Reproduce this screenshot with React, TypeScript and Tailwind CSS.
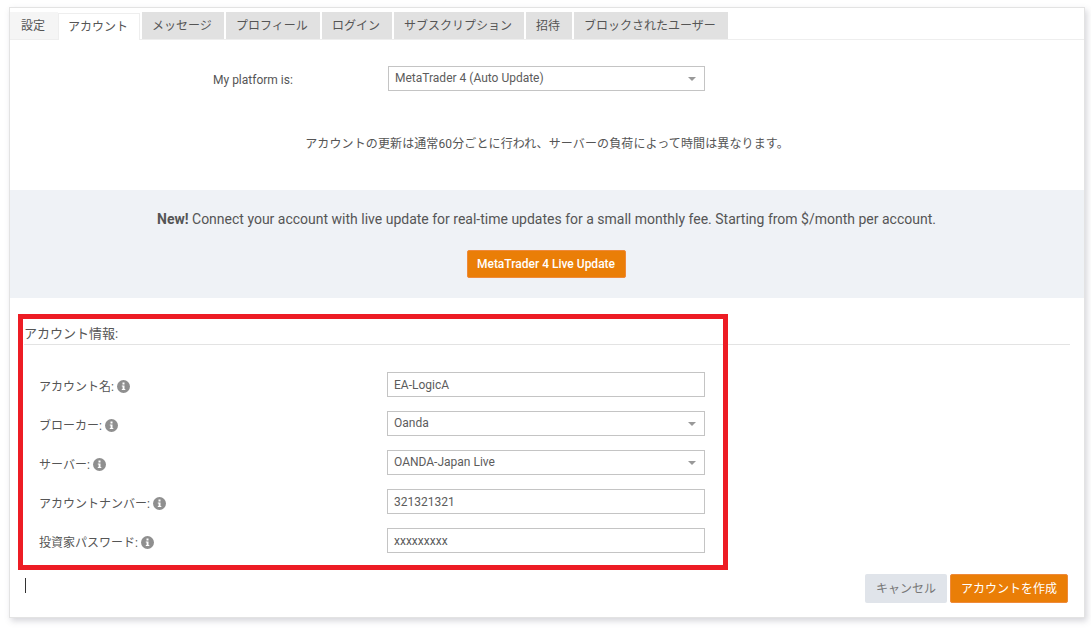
import type { ReactNode } from 'react'

const FONT = "font-['Roboto','Noto_Sans_CJK_JP',sans-serif]"

const TABS = [
  { label: '設定', cls: 'w-[48px] h-[27px] bg-[#f5f5f5]' },
  { label: 'アカウント', cls: '-ml-[2px] -mb-px w-[82px] h-[27px] bg-white border-x border-t border-[#eeeeee]' },
  { label: 'メッセージ', cls: 'w-[82px] h-[27px] bg-[#e1e1e1]' },
  { label: 'プロフィール', cls: 'w-[94px] h-[27px] bg-[#e1e1e1]' },
  { label: 'ログイン', cls: 'w-[70px] h-[27px] bg-[#e1e1e1]' },
  { label: 'サブスクリプション', cls: 'w-[130px] h-[27px] bg-[#e1e1e1]' },
  { label: '招待', cls: 'w-[46px] h-[27px] bg-[#e1e1e1]' },
  { label: 'ブロックされたユーザー', cls: 'w-[154px] h-[27px] bg-[#e1e1e1]' },
]

const FIELDS = [
  { label: 'アカウント名:', value: 'EA-LogicA' },
  { label: 'ブローカー:', value: 'Oanda', select: true },
  { label: 'サーバー:', value: 'OANDA-Japan Live', select: true },
  { label: 'アカウントナンバー:', value: '321321321' },
  { label: '投資家パスワード:', value: 'xxxxxxxxx' },
]

function InfoIcon() {
  return (
    <svg width="13" height="13" viewBox="0 0 13 13" className="shrink-0">
      <circle cx="6.5" cy="6.5" r="6.5" fill="#8f8f8f" />
      <rect x="5.5" y="2.5" width="2" height="2" fill="#fff" />
      <path d="M4.8 5.5h2.7v3.6h.8v1H4.8v-1h.8V6.5h-.8z" fill="#fff" />
    </svg>
  )
}

function Box({ value, select, className }: { value: string; select?: boolean; className?: string }) {
  return (
    <div className={`${className ?? 'w-[318px]'} flex h-[25px] items-center justify-between border border-[#c4c4c4] bg-white pl-[6px] pr-[8px] text-xs text-[#5c5c5c]`}>
      <span className={select ? 'pb-[2px]' : ''}>{value}</span>
      {select && <span className="h-0 w-0 border-x-[4px] border-t-[4px] border-x-transparent border-t-[#999]" />}
    </div>
  )
}

function OrangeButton({ className, children }: { className: string; children: ReactNode }) {
  return (
    <button className={`${className} rounded-[2px] border border-[#ef8a3a] bg-[#ea7e07] text-xs text-white`}>{children}</button>
  )
}

export default function App() {
  return (
    <div className={`${FONT} relative h-[628px] w-[1091px] overflow-hidden bg-white pl-[9px] pt-[7px] text-[#555]`}>
      <div className="flex h-[611px] w-[1076px] flex-col border border-[#e3e3e3] bg-white shadow-[2px_3px_6px_rgba(90,90,110,0.25)]">
        <div className="flex h-[32px] items-end gap-[2px] border-b border-[#eeeeee] bg-white">
          {TABS.map((t) => (
            <div key={t.label} className={`${t.cls} flex shrink-0 items-center justify-center pr-[2px] text-xs text-[#555]`}>
              {t.label}
            </div>
          ))}
        </div>

        <div className="flex h-[150px] flex-col">
          <div className="mt-[26px] flex items-center">
            <div className="ml-[203px] w-[175px] pt-[3px] text-xs">My platform is:</div>
            <Box value="MetaTrader 4 (Auto Update)" select className="w-[317px]" />
          </div>
          <p className="mt-[45px] text-center text-xs tracking-[0.12px]">アカウントの更新は通常60分ごとに行われ、サーバーの負荷によって時間は異なります。</p>
        </div>

        <div className="flex h-[108px] flex-col items-center bg-[#eff2f6] pt-[20px]">
          <p className="-ml-[1px] text-sm leading-[18px] text-[#555]">
            <b className="font-bold">New!</b> Connect your account with live update for real-time updates for a small monthly fee. Starting from $/month per account.
          </p>
          <OrangeButton className="mt-[22px] -ml-[2px] h-[28px] w-[159px] font-medium">MetaTrader 4 Live Update</OrangeButton>
        </div>

        <div className="flex-1 px-[14px] pt-[26px]">
          <div className="h-[21px] border-b border-[#e3e3e3] pt-[1px] text-[13px] leading-[18px]">アカウント情報:</div>
          <div className="mt-[27px] flex flex-col gap-[14px]">
            {FIELDS.map((f) => (
              <div key={f.label} className="flex items-center">
                <div className="ml-[15px] flex w-[348px] items-center gap-[3px] pt-[4px] text-xs">
                  <span>{f.label}</span>
                  <InfoIcon />
                </div>
                <Box value={f.value} select={f.select} />
              </div>
            ))}
          </div>
          <div className="mt-[21px] flex justify-end gap-[3px] pr-[2px]">
            <button className="h-[29px] w-[82px] rounded-[2px] bg-[#e0e4ea] text-xs text-[#777]">キャンセル</button>
            <OrangeButton className="h-[29px] w-[118px]">アカウントを作成</OrangeButton>
          </div>
        </div>
      </div>

      {/* annotation drawn over the form */}
      <div className="absolute left-[18px] top-[314px] h-[256px] w-[710px] border-[5px] border-[#ed1c24]" />
      <div className="absolute left-[25px] top-[578px] h-[15px] w-px bg-[#333]" />
    </div>
  )
}
